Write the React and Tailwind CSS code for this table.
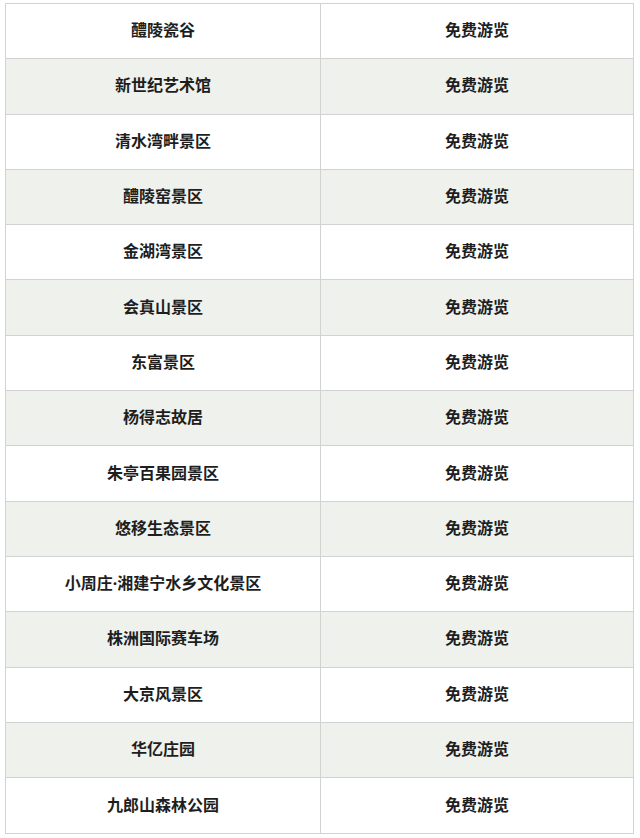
const rows = [
  "醴陵瓷谷",
  "新世纪艺术馆",
  "清水湾畔景区",
  "醴陵窑景区",
  "金湖湾景区",
  "会真山景区",
  "东富景区",
  "杨得志故居",
  "朱亭百果园景区",
  "悠移生态景区",
  "小周庄·湘建宁水乡文化景区",
  "株洲国际赛车场",
  "大京风景区",
  "华亿庄园",
  "九郎山森林公园",
]

export default function App() {
  return (
    <div
      className="w-[640px] h-[838px] bg-white pl-[5px] pt-[3px]"
      style={{ fontFamily: '"Noto Sans", "Noto Sans CJK SC", sans-serif' }}
    >
      <div className="w-[629px] border border-[#d2d2d2]">
        {rows.map((name, i) => (
          <div
            key={name}
            className={`flex h-[55.3px] ${i < rows.length - 1 ? "border-b border-[#d2d2d2]" : ""} ${i % 2 === 1 ? "bg-[#eff1ec]" : "bg-white"}`}
          >
            <div className="w-[315px] border-r border-[#d2d2d2] flex items-center justify-center pb-[2px] text-[16px] leading-none font-bold text-[#1e1e1e]">
              {name}
            </div>
            <div className="flex-1 flex items-center justify-center pb-[2px] text-[16px] leading-none font-bold text-[#1e1e1e]">
              免费游览
            </div>
          </div>
        ))}
      </div>
    </div>
  )
}
